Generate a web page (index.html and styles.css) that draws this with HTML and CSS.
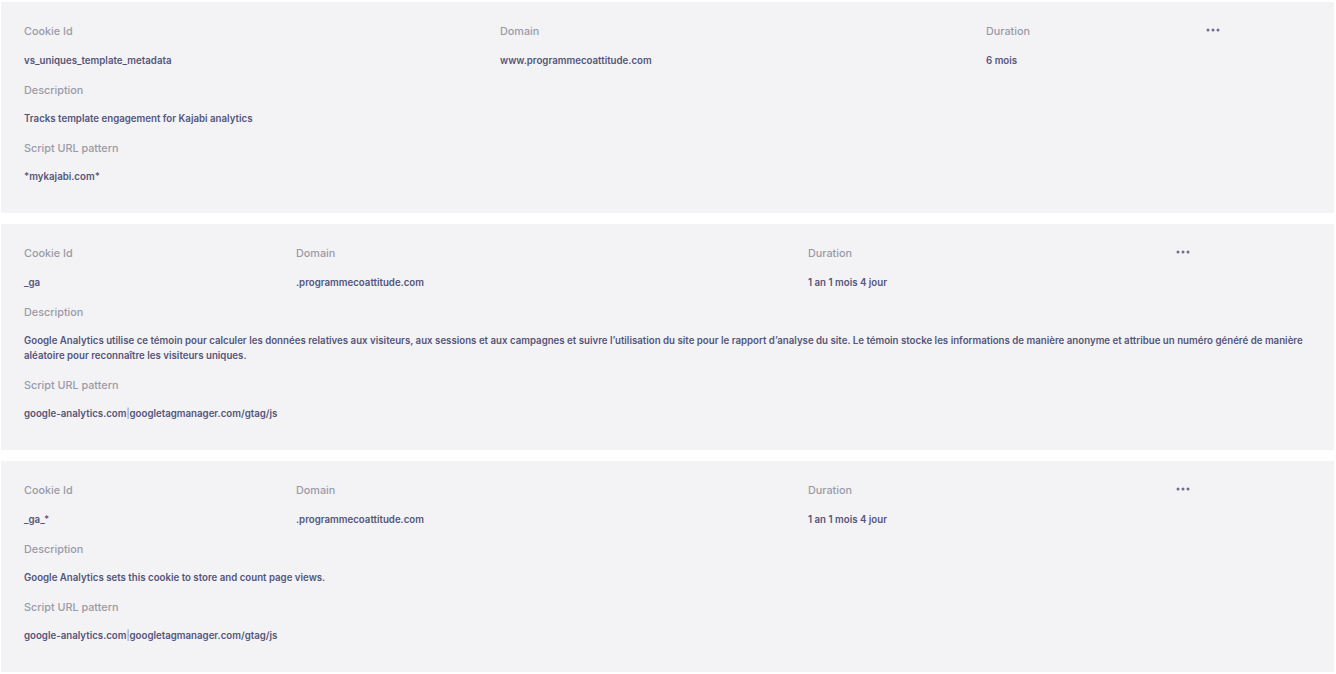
FILE: index.html
```html
<!DOCTYPE html>
<html lang="en">
<head>
<meta charset="UTF-8">
<meta name="viewport" content="width=device-width, initial-scale=1.0">
<title>Cookies</title>
<link rel="stylesheet" href="styles.css">
</head>
<body>
  <div class="cookie-list">

    <div class="cookie-card">
      <div class="cookie-head cols-wide">
        <div>
          <div class="field-label">Cookie Id</div>
          <div class="field-value">vs_uniques_template_metadata</div>
        </div>
        <div>
          <div class="field-label">Domain</div>
          <div class="field-value">www.programmecoattitude.com</div>
        </div>
        <div>
          <div class="field-label">Duration</div>
          <div class="field-value">6 mois</div>
        </div>
        <div class="more-btn">
          <svg width="14" height="4" viewBox="0 0 14 4"><circle cx="2" cy="2" r="1.5"/><circle cx="7" cy="2" r="1.5"/><circle cx="12" cy="2" r="1.5"/></svg>
        </div>
      </div>
      <div class="field-label">Description</div>
      <div class="field-value">Tracks template engagement for Kajabi analytics</div>
      <div class="field-label">Script URL pattern</div>
      <div class="field-value">*mykajabi.com*</div>
    </div>

    <div class="cookie-card">
      <div class="cookie-head cols-narrow">
        <div>
          <div class="field-label">Cookie Id</div>
          <div class="field-value">_ga</div>
        </div>
        <div>
          <div class="field-label">Domain</div>
          <div class="field-value">.programmecoattitude.com</div>
        </div>
        <div>
          <div class="field-label">Duration</div>
          <div class="field-value">1 an 1 mois 4 jour</div>
        </div>
        <div class="more-btn">
          <svg width="14" height="4" viewBox="0 0 14 4"><circle cx="2" cy="2" r="1.5"/><circle cx="7" cy="2" r="1.5"/><circle cx="12" cy="2" r="1.5"/></svg>
        </div>
      </div>
      <div class="field-label">Description</div>
      <div class="field-value">Google Analytics utilise ce témoin pour calculer les données relatives aux visiteurs, aux sessions et aux campagnes et suivre l’utilisation du site pour le rapport d’analyse du site. Le témoin stocke les informations de manière anonyme et attribue un numéro généré de manière aléatoire pour reconnaître les visiteurs uniques.</div>
      <div class="field-label">Script URL pattern</div>
      <div class="field-value">google-analytics.com<span class="pipe">|</span>googletagmanager.com/gtag/js</div>
    </div>

    <div class="cookie-card">
      <div class="cookie-head cols-narrow">
        <div>
          <div class="field-label">Cookie Id</div>
          <div class="field-value">_ga_*</div>
        </div>
        <div>
          <div class="field-label">Domain</div>
          <div class="field-value">.programmecoattitude.com</div>
        </div>
        <div>
          <div class="field-label">Duration</div>
          <div class="field-value">1 an 1 mois 4 jour</div>
        </div>
        <div class="more-btn">
          <svg width="14" height="4" viewBox="0 0 14 4"><circle cx="2" cy="2" r="1.5"/><circle cx="7" cy="2" r="1.5"/><circle cx="12" cy="2" r="1.5"/></svg>
        </div>
      </div>
      <div class="field-label">Description</div>
      <div class="field-value">Google Analytics sets this cookie to store and count page views.</div>
      <div class="field-label">Script URL pattern</div>
      <div class="field-value">google-analytics.com<span class="pipe">|</span>googletagmanager.com/gtag/js</div>
    </div>

  </div>
</body>
</html>
```

FILE: styles.css
```css
body {
  font-family: Inter, "Noto Sans", sans-serif;
  background-color: #fff;
  margin: 0;
  padding: 2px 2px 0 1px;
}

.cookie-list {
  display: flex;
  flex-direction: column;
  gap: 11px;
}

.cookie-card {
  background-color: #f3f3f6;
  padding: 22px 23px 14px;
}

.cookie-head {
  display: grid;
}

.cookie-head .field-label {
  margin-bottom: 14px;
}

.cols-wide {
  grid-template-columns: 476px 486px 220px auto;
}

.cols-narrow {
  grid-template-columns: 272px 512px 368px auto;
}

.field-label {
  font-size: 10.8px;
  line-height: 15px;
  font-weight: 500;
  color: #9a9aa6;
  margin-bottom: 13px;
}

.field-value {
  font-size: 9.7px;
  line-height: 15px;
  font-weight: 600;
  color: #55557a;
  margin-bottom: 15px;
}

.pipe {
  font-weight: 300;
}

.more-btn {
  padding-top: 4px;
}

.more-btn svg {
  display: block;
  fill: #6e6e8c;
}
```
